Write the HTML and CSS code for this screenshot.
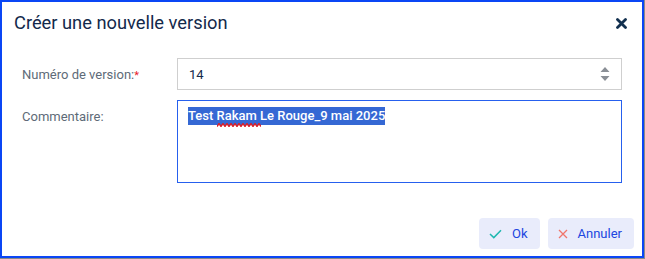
FILE: index.html
```html
<!DOCTYPE html>
<html>
<head>
    <title>Créer une nouvelle version</title>
    <link rel="stylesheet" href="styles.css">
</head>
<body>
    <div class="frame">
        <div class="dialog">
            <div class="header">
                <h1>Créer une nouvelle version</h1>
                <span class="close">
                    <svg width="11" height="11" viewBox="0 0 11 11"><path d="M1.5 1.5 L9.5 9.5 M9.5 1.5 L1.5 9.5" stroke="#12304f" stroke-width="2.8" stroke-linecap="round"/></svg>
                </span>
            </div>
            <div class="form">
                <div class="row">
                    <label class="label">Numéro de version:<span class="req">*</span></label>
                    <div class="input">
                        <span>14</span>
                        <svg class="spin" width="10" height="16" viewBox="0 0 10 16"><path d="M5 1 L9.5 6 H0.5 Z M0.5 10 H9.5 L5 15 Z" fill="#8a8f96"/></svg>
                    </div>
                </div>
                <div class="row">
                    <label class="label">Commentaire:</label>
                    <div class="textarea"><span class="sel">Test <span class="typo">Rakam<svg class="wave" width="44" height="4" viewBox="0 0 44 4"><path d="M0 3.5 L2 0.5 L4 3.5 L6 0.5 L8 3.5 L10 0.5 L12 3.5 L14 0.5 L16 3.5 L18 0.5 L20 3.5 L22 0.5 L24 3.5 L26 0.5 L28 3.5 L30 0.5 L32 3.5 L34 0.5 L36 3.5 L38 0.5 L40 3.5 L42 0.5 L44 3.5" fill="none" stroke="#d8202a" stroke-width="1.4"/></svg></span> Le Rouge_9 mai 2025</span></div>
                </div>
            </div>
            <div class="footer">
                <button class="btn">
                    <svg width="13" height="10" viewBox="0 0 13 10"><path d="M1 5 L4.8 8.6 L12 1.2" fill="none" stroke="#1fb8b0" stroke-width="1.5"/></svg>
                    Ok
                </button>
                <button class="btn">
                    <svg width="10" height="10" viewBox="0 0 10 10"><path d="M1 1 L9 9 M9 1 L1 9" stroke="#f0766b" stroke-width="1.3"/></svg>
                    Annuler
                </button>
            </div>
        </div>
    </div>
</body>
</html>
```

FILE: styles.css
```css
body {
    margin: 0;
    padding: 0;
    background: #fff;
    font-family: Roboto, "Liberation Sans", Arial, sans-serif;
}

.frame {
    width: 644px;
    height: 258px;
    border-right: 1px solid #8a8a8a;
    border-bottom: 1px solid #8a8a8a;
}

.dialog {
    box-sizing: border-box;
    width: 644px;
    height: 258px;
    border: 2px solid #0a46f5;
    background: #fff;
    display: flex;
    flex-direction: column;
}

.header {
    display: flex;
    justify-content: space-between;
    align-items: center;
    padding: 7px 15px 0 12px;
    height: 26px;
}

h1 {
    margin: 0;
    font-size: 18.3px;
    font-weight: 400;
    color: #13294b;
}

.close {
    display: flex;
    margin-top: 3px;
}

.form {
    padding: 23px 20px 0 20px;
}

.row {
    display: flex;
    align-items: flex-start;
    margin-bottom: 10px;
}

.label {
    width: 155px;
    font-size: 13px;
    color: #5e6b78;
    padding-top: 9px;
}

.req {
    color: #e8202a;
    font-size: 11px;
}

.input {
    box-sizing: border-box;
    width: 445px;
    height: 32px;
    border: 1px solid #cfcfcf;
    display: flex;
    align-items: center;
    justify-content: space-between;
    padding: 0 11px 0 11px;
    font-size: 13px;
    color: #13294b;
}

.textarea {
    box-sizing: border-box;
    width: 445px;
    height: 83px;
    border: 1px solid #2660ee;
    padding: 5px 10px;
    font-size: 13px;
    line-height: 20px;
}

.sel {
    background: #3568d4;
    color: #fff;
    padding: 1px 0 2px;
    font-weight: 500;
}

.typo {
    position: relative;
}

.wave {
    position: absolute;
    left: 0;
    bottom: -4px;
}

.footer {
    margin-top: auto;
    display: flex;
    justify-content: flex-end;
    gap: 8px;
    padding: 0 8px 7px 0;
}

.btn {
    display: flex;
    align-items: center;
    gap: 10px;
    height: 31px;
    padding: 0 12px 0 10px;
    border: none;
    border-radius: 4px;
    background: #e9ecfb;
    color: #2046e0;
    font-family: Roboto, "Liberation Sans", Arial, sans-serif;
    font-size: 13px;
}
```
